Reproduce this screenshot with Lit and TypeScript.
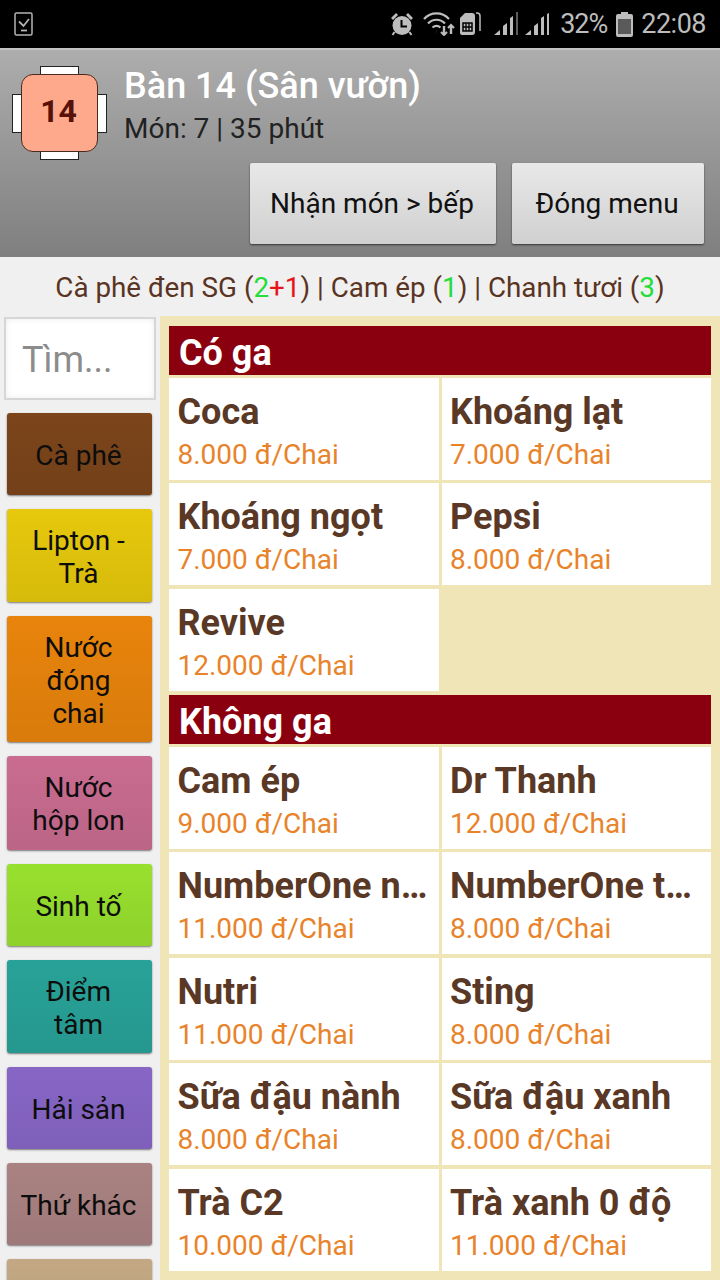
import { LitElement, css, html } from 'lit';
import { customElement } from 'lit/decorators.js';

interface Item { name: string; price: string; }
interface Group { title: string; items: Item[]; }

const NOTES = [
  { name: 'Cà phê đen SG', qty: html`<b class="ok">2</b><b class="extra">+1</b>` },
  { name: 'Cam ép', qty: html`<b class="ok">1</b>` },
  { name: 'Chanh tươi', qty: html`<b class="ok">3</b>` },
];

const CATEGORIES = [
  { label: 'Cà phê', color: '#7c451b', h: 82 },
  { label: 'Lipton - Trà', color: '#e6c80c', h: 93 },
  { label: 'Nước đóng chai', color: '#e8840c', h: 126 },
  { label: 'Nước hộp lon', color: '#c96c90', h: 94 },
  { label: 'Sinh tố', color: '#98e02e', h: 82 },
  { label: 'Điểm tâm', color: '#28a298', h: 93 },
  { label: 'Hải sản', color: '#8766c6', h: 82 },
  { label: 'Thứ khác', color: '#aa8282', h: 82 },
  { label: '', color: '#c3a883', h: 82 },
];

const GROUPS: Group[] = [
  {
    title: 'Có ga',
    items: [
      { name: 'Coca', price: '8.000 đ/Chai' },
      { name: 'Khoáng lạt', price: '7.000 đ/Chai' },
      { name: 'Khoáng ngọt', price: '7.000 đ/Chai' },
      { name: 'Pepsi', price: '8.000 đ/Chai' },
      { name: 'Revive', price: '12.000 đ/Chai' },
    ],
  },
  {
    title: 'Không ga',
    items: [
      { name: 'Cam ép', price: '9.000 đ/Chai' },
      { name: 'Dr Thanh', price: '12.000 đ/Chai' },
      { name: 'NumberOne ngọt', price: '11.000 đ/Chai' },
      { name: 'NumberOne tăng lực', price: '8.000 đ/Chai' },
      { name: 'Nutri', price: '11.000 đ/Chai' },
      { name: 'Sting', price: '8.000 đ/Chai' },
      { name: 'Sữa đậu nành', price: '8.000 đ/Chai' },
      { name: 'Sữa đậu xanh', price: '8.000 đ/Chai' },
      { name: 'Trà C2', price: '10.000 đ/Chai' },
      { name: 'Trà xanh 0 độ', price: '11.000 đ/Chai' },
    ],
  },
];

@customElement('app-root')
export class AppRoot extends LitElement {
  static styles = css`
    :host {
      display: flex;
      flex-direction: column;
      width: 720px;
      height: 1280px;
      overflow: hidden;
      font-family: Roboto, "Noto Sans", sans-serif;
      background: #eeeeee;
    }

    .status {
      flex: none;
      height: 48px;
      background: #000;
      display: flex;
      align-items: center;
      padding: 0 14px;
      color: #bdbdbd;
      font-size: 27px;
    }
    .status svg { display: block; flex: none; }
    .status .spacer { flex: 1; }
    .status .pct { margin: 0 9px 0 10px; letter-spacing: -1px; }
    .status .clock { margin-left: 8px; letter-spacing: -0.5px; }

    .head {
      flex: none;
      height: 209px;
      box-sizing: border-box;
      background: linear-gradient(#adadad, #7f7f7f);
      border-top: 2px solid #c4c4c4;
      padding: 16px 16px 0 12px;
      display: flex;
      flex-direction: column;
    }
    .head-top { display: flex; gap: 17px; }
    .table {
      flex: none;
      width: 95px;
      height: 94px;
      position: relative;
    }
    .seat {
      position: absolute;
      background: #fff;
      border: 1px solid #222;
      box-sizing: border-box;
    }
    .seat.t { left: 28px; top: 0; width: 39px; height: 10px; }
    .seat.b { left: 28px; bottom: 0; width: 39px; height: 10px; }
    .seat.l { left: 0; top: 28px; width: 11px; height: 39px; }
    .seat.r { right: 0; top: 28px; width: 11px; height: 39px; }
    .top {
      position: absolute;
      inset: 8px 9px;
      box-sizing: border-box;
      background: #ffa98c;
      border: 1px solid #4a2a20;
      border-radius: 12px;
      padding: 0 2px 5px 0;
      display: flex;
      align-items: center;
      justify-content: center;
      font-size: 32px;
      font-weight: 700;
      color: #561208;
    }
    .title { font-size: 36px; font-weight: 500; color: #fff; line-height: 40px; }
    .sub { font-size: 28px; color: #222; line-height: 32px; margin-top: 7px; }
    .actions { display: flex; justify-content: flex-end; gap: 16px; margin-top: 3px; }
    .btn {
      height: 81px;
      box-sizing: border-box;
      background: linear-gradient(#e8e8e8, #d0d0d0);
      border-radius: 2px;
      box-shadow: 0 1px 2px rgba(0, 0, 0, 0.6);
      display: flex;
      align-items: center;
      justify-content: center;
      padding-right: 2px;
      font-size: 28px;
      color: #111;
    }
    .btn.send { width: 246px; }
    .btn.close { width: 192px; }

    .notes {
      flex: none;
      height: 59px;
      box-sizing: border-box;
      padding-top: 2px;
      display: flex;
      align-items: center;
      justify-content: center;
      font-size: 27.8px;
      color: #5a3423;
      background: #f0f0f0;
    }
    .notes b { font-weight: 400; }
    .notes .ok { color: #22dd3a; }
    .notes .extra { color: #e8141c; }

    .body { flex: 1; min-height: 0; display: flex; }

    .side {
      flex: none;
      width: 160px;
      box-sizing: border-box;
      padding: 1px 4px 0;
      display: flex;
      flex-direction: column;
      background: #f0f0f0;
    }
    .search {
      flex: none;
      height: 83px;
      box-sizing: border-box;
      background: #fff;
      border: 2px solid #d6d6d6;
      box-shadow: inset 0 0 6px rgba(0, 0, 0, 0.08);
      display: flex;
      align-items: center;
      padding: 2px 0 0 16px;
      font-size: 36px;
      color: #8c8c8c;
      margin-bottom: 13px;
    }
    .cat {
      flex: none;
      margin: 0 4px 14px 3px;
      box-sizing: border-box;
      border-radius: 3px;
      box-shadow: 0 1px 2px rgba(0, 0, 0, 0.5);
      display: flex;
      align-items: center;
      justify-content: center;
      text-align: center;
      padding: 2px 15px 0 13px;
      font-size: 28px;
      line-height: 33px;
      color: #0d0d0d;
    }

    .menu {
      flex: 1;
      min-width: 0;
      background: #efe5b6;
      padding: 10px 9px 0;
      display: flex;
      flex-direction: column;
      gap: 4.5px;
    }
    .group-title {
      height: 49px;
      background: #8b000f;
      color: #fff;
      font-size: 36px;
      font-weight: 700;
      line-height: 54px;
      padding-left: 10px;
    }
    .grid {
      display: grid;
      grid-template-columns: 269.5px 269.5px;
      column-gap: 3px;
      row-gap: 3.5px;
      margin-top: 2.5px;
    }
    .item {
      background: #fff;
      height: 102px;
      box-sizing: border-box;
      padding: 13px 9px 0 8.5px;
      min-width: 0;
    }
    .name {
      font-size: 36px;
      font-weight: 700;
      line-height: 42px;
      color: #5a3826;
      white-space: nowrap;
      overflow: hidden;
      text-overflow: ellipsis;
    }
    .price {
      font-size: 28px;
      line-height: 32px;
      margin-top: 6px;
      color: #e8832a;
      white-space: nowrap;
    }
  `;

  renderStatus() {
    return html`
      <div class="status">
        <svg width="20" height="24" viewBox="0 0 20 24" fill="none" stroke="#b4b4b4">
          <rect x="1" y="1" width="17" height="22" rx="1.500" stroke-width="1.500" />
          <path d="M5 9.500l4.500 4.500L15 7" stroke-width="1.800" />
          <path d="M7 18.500h6" stroke-width="1.800" />
        </svg>
        <div class="spacer"></div>
        <svg width="24" height="24" viewBox="0 0 24 24" fill="#bdbdbd">
          <circle cx="12" cy="13.500" r="9.500" />
          <path d="M1 6l5-5 2 2-5 5zM23 6l-5-5-2 2 5 5z" />
          <path d="M4.500 20l-2 3M19.500 20l2 3" stroke="#bdbdbd" stroke-width="2" />
          <path d="M11.500 8v6.500h5.500" fill="none" stroke="#000" stroke-width="2" />
        </svg>
        <svg style="margin-left:9px" width="32" height="24" viewBox="0 0 32 24" fill="none" stroke="#bdbdbd" stroke-width="2.200">
          <path d="M1 7c7-7.500 18-7.500 25 0" />
          <path d="M5 11.500c5-5 12-5 17 0" />
          <path d="M9.500 15.500c3-2.500 5-2.500 8 0" />
          <path d="M13.500 19.500h.1" stroke-width="3.500" />
          <path d="M21 14v9M28 22v-8" stroke-width="2.400" />
          <path d="M18 20l3 3 3-3M25 16l3-3 3 3" stroke-width="2" />
        </svg>
        <svg style="margin-left:4px" width="22" height="24" viewBox="0 0 22 24" fill="none">
          <path d="M1 6l5-5h7a3 3 0 0 1 3 3v16a3 3 0 0 1-3 3H3a2 2 0 0 1-2-2z" fill="#bdbdbd" />
          <path d="M17 1h1a3 3 0 0 1 3 3v15" stroke="#bdbdbd" stroke-width="1.500" />
          <rect x="4" y="11" width="9" height="8" fill="none" stroke="#000" stroke-width="1.500" />
          <path d="M7 11v8M10 11v8M4 15h9" stroke="#000" stroke-width="1.300" />
        </svg>
        <svg style="margin-left:13px" width="25" height="24" viewBox="0 0 25 24" fill="#bdbdbd">
          <path d="M0 23l6-5v5zM9 23v-9l4-3v12zM16 23V6l3-2v19z" />
          <rect x="22" y="0" width="2" height="23" fill="#5c5c5c" />
        </svg>
        <svg style="margin-left:6px" width="25" height="24" viewBox="0 0 25 24" fill="#bdbdbd">
          <path d="M0 23l6-5v5zM9 23v-9l4-3v12zM16 23V6l3-2v19zM22 2l2-1v22h-2z" />
        </svg>
        <span class="pct">32%</span>
        <svg width="17" height="25" viewBox="0 0 17 25">
          <path d="M5 0h7v2h3a2 2 0 0 1 2 2v19a2 2 0 0 1-2 2H2a2 2 0 0 1-2-2V4a2 2 0 0 1 2-2h3z" fill="#bdbdbd" />
          <rect x="2" y="7" width="13" height="15" fill="#5a5a5a" />
        </svg>
        <span class="clock">22:08</span>
      </div>
    `;
  }

  render() {
    return html`
      ${this.renderStatus()}
      <div class="head">
        <div class="head-top">
          <div class="table">
            <div class="seat t"></div>
            <div class="seat b"></div>
            <div class="seat l"></div>
            <div class="seat r"></div>
            <div class="top">14</div>
          </div>
          <div>
            <div class="title">Bàn 14 (Sân vườn)</div>
            <div class="sub">Món: 7 | 35 phút</div>
          </div>
        </div>
        <div class="actions">
          <div class="btn send">Nhận món &gt; bếp</div>
          <div class="btn close">Đóng menu</div>
        </div>
      </div>
      <div class="notes">
        <span>
          ${NOTES.map((n, i) => html`${i > 0 ? ' | ' : ''}${n.name} (${n.qty})`)}
        </span>
      </div>
      <div class="body">
        <div class="side">
          <div class="search">Tìm...</div>
          ${CATEGORIES.map(c => html`
            <div class="cat" style="height:${c.h}px;background:linear-gradient(${c.color}, ${c.color}ee), #000">${c.label}</div>
          `)}
        </div>
        <div class="menu">
          ${GROUPS.map(g => html`
            <div>
              <div class="group-title">${g.title}</div>
              <div class="grid">
                ${g.items.map(it => html`
                  <div class="item">
                    <div class="name">${it.name}</div>
                    <div class="price">${it.price}</div>
                  </div>
                `)}
              </div>
            </div>
          `)}
        </div>
      </div>
    `;
  }
}
